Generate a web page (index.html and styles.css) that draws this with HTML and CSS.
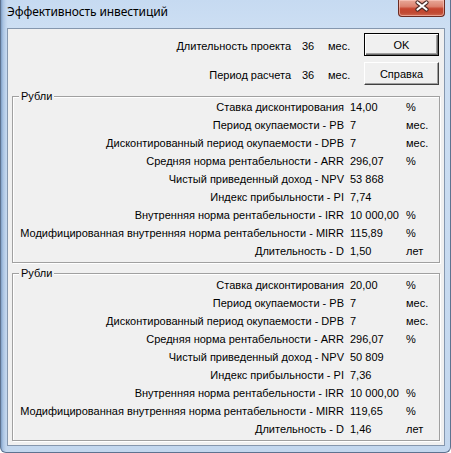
FILE: index.html
```html
<!DOCTYPE html>
<html lang="ru">
<head>
<meta charset="utf-8">
<title>Эффективность инвестиций</title>
<link rel="stylesheet" href="styles.css">
</head>
<body>
<div class="window">
  <div class="titlebar">
    <span class="title">Эффективность инвестиций</span>
    <div class="close">
      <svg width="47" height="17" viewBox="0 0 47 17">
        <path d="M19.5 3.5 L28.5 10.5 M28.5 3.5 L19.5 10.5" stroke="#4a2a26" stroke-width="4.2" stroke-linecap="round" fill="none"/>
        <path d="M19.5 3.5 L28.5 10.5 M28.5 3.5 L19.5 10.5" stroke="#ffffff" stroke-width="2.2" stroke-linecap="round" fill="none"/>
      </svg>
    </div>
  </div>
  <div class="client">
    <div class="header">
      <span class="hlabel">Длительность проекта</span><span class="hval">36</span><span class="hunit">мес.</span><button class="btn default">OK</button>
      <span class="hlabel">Период расчета</span><span class="hval">36</span><span class="hunit">мес.</span><button class="btn">Справка</button>
    </div>

    <div class="group">
      <span class="group-label">Рубли</span>
      <div class="rows">
        <span class="lbl">Ставка дисконтирования</span><span class="val">14,00</span><span class="unit">%</span>
        <span class="lbl">Период окупаемости - PB</span><span class="val">7</span><span class="unit">мес.</span>
        <span class="lbl">Дисконтированный период окупаемости - DPB</span><span class="val">7</span><span class="unit">мес.</span>
        <span class="lbl">Средняя норма рентабельности - ARR</span><span class="val">296,07</span><span class="unit">%</span>
        <span class="lbl">Чистый приведенный доход - NPV</span><span class="val">53 868</span><span class="unit"></span>
        <span class="lbl">Индекс прибыльности - PI</span><span class="val">7,74</span><span class="unit"></span>
        <span class="lbl">Внутренняя норма рентабельности - IRR</span><span class="val">10 000,00</span><span class="unit">%</span>
        <span class="lbl">Модифицированная внутренняя норма рентабельности - MIRR</span><span class="val">115,89</span><span class="unit">%</span>
        <span class="lbl">Длительность - D</span><span class="val">1,50</span><span class="unit">лет</span>
      </div>
    </div>

    <div class="group group-second">
      <span class="group-label">Рубли</span>
      <div class="rows">
        <span class="lbl">Ставка дисконтирования</span><span class="val">20,00</span><span class="unit">%</span>
        <span class="lbl">Период окупаемости - PB</span><span class="val">7</span><span class="unit">мес.</span>
        <span class="lbl">Дисконтированный период окупаемости - DPB</span><span class="val">7</span><span class="unit">мес.</span>
        <span class="lbl">Средняя норма рентабельности - ARR</span><span class="val">296,07</span><span class="unit">%</span>
        <span class="lbl">Чистый приведенный доход - NPV</span><span class="val">50 809</span><span class="unit"></span>
        <span class="lbl">Индекс прибыльности - PI</span><span class="val">7,36</span><span class="unit"></span>
        <span class="lbl">Внутренняя норма рентабельности - IRR</span><span class="val">10 000,00</span><span class="unit">%</span>
        <span class="lbl">Модифицированная внутренняя норма рентабельности - MIRR</span><span class="val">119,65</span><span class="unit">%</span>
        <span class="lbl">Длительность - D</span><span class="val">1,46</span><span class="unit">лет</span>
      </div>
    </div>
  </div>
</div>
</body>
</html>
```

FILE: styles.css
```css
html, body {
  margin: 0;
  padding: 0;
}

body {
  width: 451px;
  height: 453px;
  overflow: hidden;
  background: #ffffff;
  font-family: "Liberation Sans", Arial, sans-serif;
  font-size: 11px;
  color: #000;
}

.window {
  box-sizing: border-box;
  width: 451px;
  height: 453px;
  display: flex;
  flex-direction: column;
  background:
    linear-gradient(to right, #7f9fc6 0, #a9c3e2 2px, #c2d6ee 5px, rgba(194,214,238,0) 7px),
    linear-gradient(to bottom, #c6daf1 0, #cddff3 30px, #c3d7ee 100%);
  border: 1px solid #5e7390;
  border-top: none;
  border-radius: 0 0 6px 6px;
}

.titlebar {
  height: 28px;
  flex: 0 0 28px;
  display: flex;
  align-items: flex-start;
  justify-content: space-between;
  padding-left: 6px;
  padding-right: 5px;
}

.title {
  font-family: "Noto Sans", "Open Sans", sans-serif;
  font-size: 12px;
  line-height: 16px;
  margin-top: 4px;
  color: #000;
  letter-spacing: -0.1px;
}

.close {
  width: 47px;
  height: 17px;
  box-sizing: border-box;
  border: 1px solid #6b2b22;
  border-top: none;
  border-radius: 0 0 4px 4px;
  background: linear-gradient(to bottom, #e8a898 0, #dc8370 40%, #c6452f 55%, #c04a33 80%, #d06a52 100%);
  box-shadow: inset 0 0 0 1px rgba(255, 210, 200, 0.55);
  overflow: hidden;
}

.close svg {
  display: block;
  margin: -1px 0 0 -1px;
}

.client {
  flex: 1;
  margin: 0 5px 6px 6px;
  border: 1px solid #8597ae;
  background: #f0f0f0;
  padding: 4px 4px 0 4px;
  display: flex;
  flex-direction: column;
}

.header {
  display: grid;
  grid-template-columns: 1fr 26px 36px 75px;
  grid-auto-rows: 23px;
  row-gap: 6px;
  align-items: center;
  margin-right: 1px;
}

.hlabel {
  text-align: right;
  padding-right: 11px;
  padding-top: 3px;
}

.hval, .hunit {
  padding-top: 3px;
}

.btn {
  box-sizing: border-box;
  width: 75px;
  height: 23px;
  margin: 0;
  padding: 0;
  font-family: "Liberation Sans", Arial, sans-serif;
  font-size: 11px;
  color: #000;
  background: #f0f0f0;
  border: 1px solid;
  border-color: #ffffff #404040 #404040 #ffffff;
  box-shadow: inset -1px -1px 0 #a0a0a0;
}

.btn.default {
  border: 1px solid #000;
  box-shadow: inset 1px 1px 0 #ffffff, inset -1px -1px 0 #696969, inset -2px -2px 0 #a0a0a0;
}

.group {
  position: relative;
  border: 1px solid #a0a0a0;
  box-shadow: inset 1px 1px 0 #ffffff, 1px 1px 0 #ffffff;
  padding: 1px 0 2px 0;
  margin-top: 11px;
}

.group.group-second {
  margin-top: 10px;
  padding-top: 2px;
}

.group-label {
  position: absolute;
  top: -7px;
  left: 6px;
  padding: 0 2px;
  line-height: 13px;
  background: #f0f0f0;
}

.rows {
  display: grid;
  grid-template-columns: 1fr 56px 33px;
  grid-auto-rows: 18px;
  align-items: center;
}

.lbl {
  text-align: right;
  padding-right: 6px;
  white-space: nowrap;
}

.val, .unit {
  white-space: nowrap;
}
```
